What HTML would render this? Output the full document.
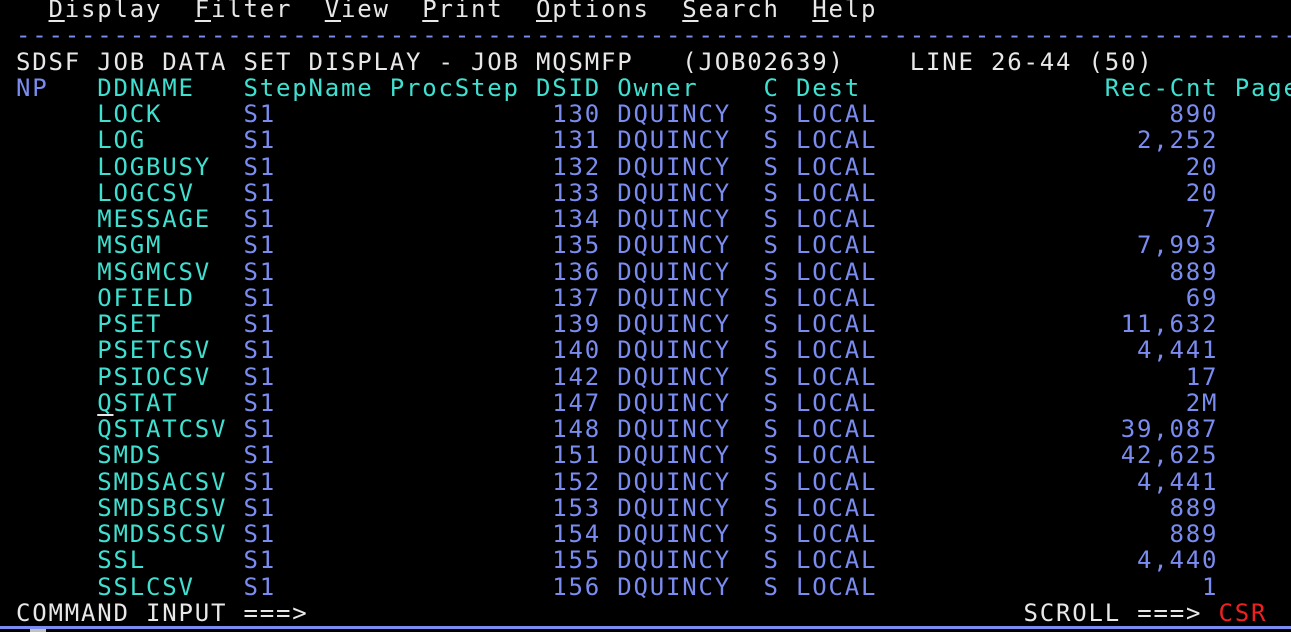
<!DOCTYPE html>
<html><head><meta charset="utf-8"><style>
html,body{margin:0;padding:0;background:#000;width:1291px;height:632px;overflow:hidden}
pre{margin:0;position:absolute;left:16px;top:-4px;font-family:"DejaVu Sans Mono","Liberation Mono",monospace;font-size:24px;letter-spacing:1.8px;line-height:26.25px;color:#e8e8e8;white-space:pre}
.t{color:#40e0d0}.b{color:#7b8cf0}.w{color:#e8e8e8}.r{color:#f02020}
.u{text-decoration:underline;text-underline-offset:3px}
.n{display:inline-block;width:341px;text-align:right}
.line{position:absolute;left:0;top:626px;width:1291px;height:3px;background:#7b8cf0}
.cur{position:absolute;left:30px;top:629px;width:16px;height:3px;background:#c0c0c0}
</style></head><body>
<pre>  <span class="u">D</span>isplay  <span class="u">F</span>ilter  <span class="u">V</span>iew  <span class="u">P</span>rint  <span class="u">O</span>ptions  <span class="u">S</span>earch  <span class="u">H</span>elp
<span class="b">--------------------------------------------------------------------------------</span>
SDSF JOB DATA SET DISPLAY - JOB MQSMFP   (JOB02639)    LINE 26-44 (50)
<span class="b">NP</span>   <span class="t">DDNAME   StepName ProcStep DSID Owner    C Dest               Rec-Cnt Page</span>
     <span class="t">LOCK    </span> <span class="b">S1                 130 DQUINCY  S LOCAL<span class="n">890</span></span>
     <span class="t">LOG     </span> <span class="b">S1                 131 DQUINCY  S LOCAL<span class="n">2,252</span></span>
     <span class="t">LOGBUSY </span> <span class="b">S1                 132 DQUINCY  S LOCAL<span class="n">20</span></span>
     <span class="t">LOGCSV  </span> <span class="b">S1                 133 DQUINCY  S LOCAL<span class="n">20</span></span>
     <span class="t">MESSAGE </span> <span class="b">S1                 134 DQUINCY  S LOCAL<span class="n">7</span></span>
     <span class="t">MSGM    </span> <span class="b">S1                 135 DQUINCY  S LOCAL<span class="n">7,993</span></span>
     <span class="t">MSGMCSV </span> <span class="b">S1                 136 DQUINCY  S LOCAL<span class="n">889</span></span>
     <span class="t">OFIELD  </span> <span class="b">S1                 137 DQUINCY  S LOCAL<span class="n">69</span></span>
     <span class="t">PSET    </span> <span class="b">S1                 139 DQUINCY  S LOCAL<span class="n">11,632</span></span>
     <span class="t">PSETCSV </span> <span class="b">S1                 140 DQUINCY  S LOCAL<span class="n">4,441</span></span>
     <span class="t">PSIOCSV </span> <span class="b">S1                 142 DQUINCY  S LOCAL<span class="n">17</span></span>
     <span class="t"><span class="u" style="text-decoration-color:#e8e8e8">Q</span>STAT   </span> <span class="b">S1                 147 DQUINCY  S LOCAL<span class="n">2M</span></span>
     <span class="t">QSTATCSV</span> <span class="b">S1                 148 DQUINCY  S LOCAL<span class="n">39,087</span></span>
     <span class="t">SMDS    </span> <span class="b">S1                 151 DQUINCY  S LOCAL<span class="n">42,625</span></span>
     <span class="t">SMDSACSV</span> <span class="b">S1                 152 DQUINCY  S LOCAL<span class="n">4,441</span></span>
     <span class="t">SMDSBCSV</span> <span class="b">S1                 153 DQUINCY  S LOCAL<span class="n">889</span></span>
     <span class="t">SMDSSCSV</span> <span class="b">S1                 154 DQUINCY  S LOCAL<span class="n">889</span></span>
     <span class="t">SSL     </span> <span class="b">S1                 155 DQUINCY  S LOCAL<span class="n">4,440</span></span>
     <span class="t">SSLCSV  </span> <span class="b">S1                 156 DQUINCY  S LOCAL<span class="n">1</span></span>
COMMAND INPUT ===>                                            SCROLL ===> <span class="r">CSR</span></pre>
<div class="line"></div><div class="cur"></div>
</body></html>
